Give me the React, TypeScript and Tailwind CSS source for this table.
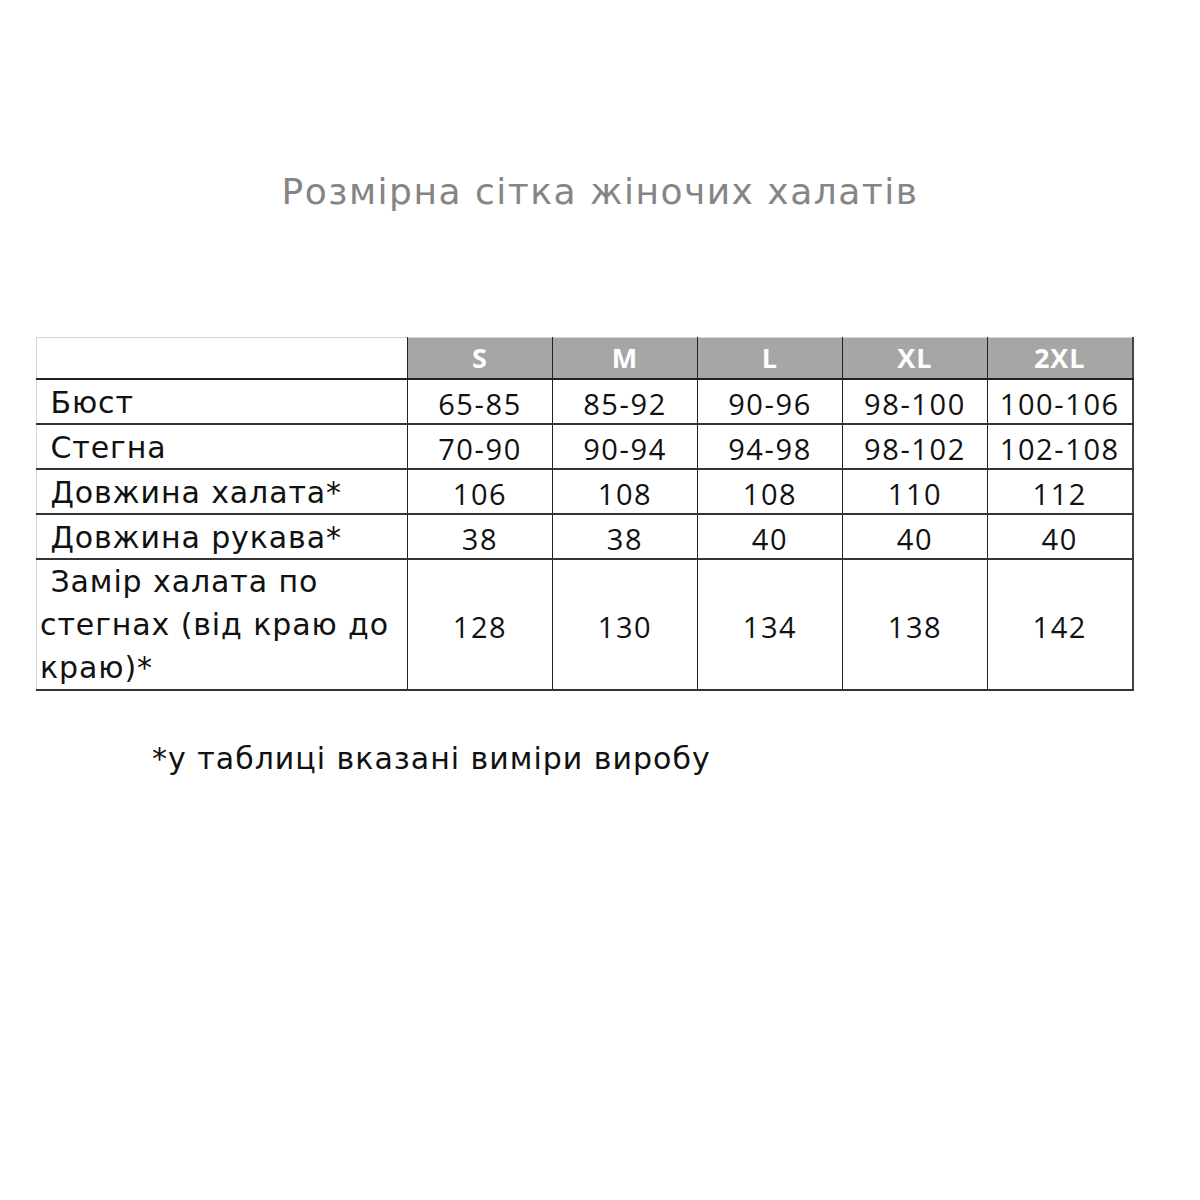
const sizes = ["S", "M", "L", "XL", "2XL"];

const rows: { label: React.ReactNode; values: string[]; h: string; multi?: boolean }[] = [
  { label: "\u00a0Бюст", values: ["65-85", "85-92", "90-96", "98-100", "100-106"], h: "h-[44px]" },
  { label: "\u00a0Стегна", values: ["70-90", "90-94", "94-98", "98-102", "102-108"], h: "h-[44px]" },
  { label: "\u00a0Довжина халата*", values: ["106", "108", "108", "110", "112"], h: "h-[44px]" },
  { label: "\u00a0Довжина рукава*", values: ["38", "38", "40", "40", "40"], h: "h-[43px]" },
  {
    label: (
      <>
        {"\u00a0Замір халата по"}
        <br />
        стегнах (від краю до
        <br />
        краю)*
      </>
    ),
    values: ["128", "130", "134", "138", "142"],
    h: "h-[130px]",
    multi: true,
  },
];

const gothic = "font-['DejaVu_Sans',sans-serif]";
const calibri = "font-['Open_Sans','Liberation_Sans',sans-serif]";

export default function App() {
  return (
    <div className="w-[1200px] h-[1200px] bg-white">
      <h1
        className={`${gothic} pt-[170px] text-center text-[36px] tracking-[1.5px] leading-[44px] text-[#858585] font-normal`}
      >
        Розмірна сітка жіночих халатів
      </h1>

      <table className="mt-[123px] ml-[36px] border-collapse table-fixed w-[1097px]">
        <colgroup>
          <col className="w-[371px]" />
          {sizes.map((s) => (
            <col key={s} className="w-[145px]" />
          ))}
        </colgroup>
        <thead>
          <tr className="h-[41px]">
            <th className="border-t border-l border-t-[#d4d4d4] border-l-[#d4d4d4] border-b-2 border-b-[#222] border-r border-r-[#222] bg-white"></th>
            {sizes.map((s, i) => (
              <th
                key={s}
                className={`${calibri} bg-[#a6a6a6] text-white font-bold text-[27px] tracking-[1px] leading-none border-b-2 border-b-[#222] border-t border-t-[#d4d4d4] ${
                  i === sizes.length - 1 ? "border-r-2 border-r-[#444]" : "border-r border-r-[#222]"
                }`}
              >
                {s}
              </th>
            ))}
          </tr>
        </thead>
        <tbody>
          {rows.map((r, ri) => (
            <tr key={ri} className={r.h}>
              <td
                className={`${gothic} text-left align-middle pl-[3px] text-[30px] tracking-[0.9px] text-[#111] whitespace-nowrap border-l border-l-[#d4d4d4] border-r border-r-[#222] border-b-2 border-b-[#333] ${
                  r.multi ? "leading-[43px]" : "leading-[40px] pt-[3px]"
                }`}
              >
                {r.label}
              </td>
              {r.values.map((v, vi) => (
                <td
                  key={vi}
                  className={`${calibri} text-center align-middle pt-[4px] text-[29px] tracking-[1.6px] leading-none text-[#111] border-b-2 border-b-[#333] ${
                    vi === r.values.length - 1 ? "border-r-2 border-r-[#444]" : "border-r border-r-[#222]"
                  }`}
                >
                  {v}
                </td>
              ))}
            </tr>
          ))}
        </tbody>
      </table>

      <p className={`${gothic} mt-[48px] ml-[152px] text-[30px] tracking-[1px] leading-[40px] text-[#111]`}>
        *у таблиці вказані виміри виробу
      </p>
    </div>
  );
}
